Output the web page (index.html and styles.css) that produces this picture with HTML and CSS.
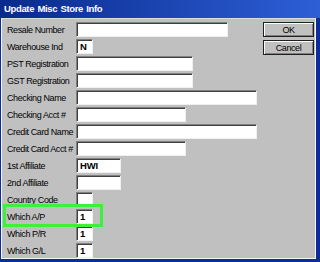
FILE: index.html
```html
<!DOCTYPE html>
<html lang="en">
<head>
  <meta charset="UTF-8">
  <title>Update Misc Store Info</title>
  <link rel="stylesheet" href="styles.css">
</head>
<body>
  <div class="window">
    <div class="titlebar">Update Misc Store Info</div>
    <div class="frame">
      <div class="client">
        <div class="form">
          <div class="label">Resale Number</div><div class="field w-xl"></div>
          <div class="label">Warehouse Ind</div><div class="field w-xs">N</div>
          <div class="label">PST Registration</div><div class="field w-l"></div>
          <div class="label">GST Registration</div><div class="field w-l"></div>
          <div class="label">Checking Name</div><div class="field w-xxl"></div>
          <div class="label">Checking Acct #</div><div class="field w-m"></div>
          <div class="label">Credit Card Name</div><div class="field w-xxl"></div>
          <div class="label">Credit Card Acct #</div><div class="field w-m"></div>
          <div class="label">1st Affiliate</div><div class="field w-s">HWI</div>
          <div class="label">2nd Affiliate</div><div class="field w-s"></div>
          <div class="label">Country Code</div><div class="field w-xs"></div>
          <div class="label">Which A/P</div><div class="field w-xs">1</div>
          <div class="label">Which P/R</div><div class="field w-xs">1</div>
          <div class="label">Which G/L</div><div class="field w-xs">1</div>
        </div>
        <div class="buttons">
          <button class="btn">OK</button>
          <button class="btn">Cancel</button>
        </div>
      </div>
    </div>
    <!-- highlight drawn over the Which A/P row -->
    <div class="highlight"></div>
  </div>
</body>
</html>
```

FILE: styles.css
```css
body {
  margin: 0;
  font-family: "Liberation Sans", Arial, sans-serif;
  font-size: 9px;
  letter-spacing: -0.4px;
  color: #000;
}
.window {
  position: relative;
  width: 320px;
  height: 262px;
  display: flex;
  flex-direction: column;
  background-color: #0c2c9c;
  overflow: hidden;
}
.titlebar {
  height: 18px;
  line-height: 17px;
  padding-left: 4px;
  color: #fff;
  font-weight: bold;
  font-size: 9.5px;
  letter-spacing: -0.35px;
  word-spacing: 1px;
  background: linear-gradient(to right, #0a2a8c, #2d5fd6);
}
.frame {
  flex: 1;
  margin: 0 4px 3px 1px;
  background-color: #c0c0c0;
  border-top: 1px solid #dcdcdc;
  border-left: 1px solid #f4f4f4;
  border-right: 1px solid #f4f4f4;
  border-bottom: 1px solid #f4f4f4;
}
.client {
  display: flex;
  padding: 3px 1px 0 5px;
}
.form {
  display: grid;
  grid-template-columns: 69px auto;
  grid-auto-rows: 15px;
  row-gap: 2px;
  align-items: center;
  justify-items: start;
}
.label {
  white-space: nowrap;
  padding-top: 1px;
}
.field {
  height: 15px;
  box-sizing: border-box;
  background-color: #fff;
  border-top: 1px solid #808080;
  border-left: 1px solid #808080;
  border-right: 1px solid #f0f0f0;
  border-bottom: 1px solid #f0f0f0;
  box-shadow: inset 1px 1px 0 #404040;
  padding: 1px 0 0 3px;
  font-size: 9.5px;
  font-weight: bold;
  letter-spacing: -0.2px;
  line-height: 12px;
}
.w-xs { width: 17px; }
.w-s { width: 45px; }
.w-m { width: 110px; }
.w-l { width: 117px; }
.w-xl { width: 152px; }
.w-xxl { width: 181px; }
.buttons {
  margin-left: auto;
  display: flex;
  flex-direction: column;
  gap: 3px;
}
.btn {
  width: 51px;
  height: 15px;
  padding: 0;
  font-family: "Liberation Sans", Arial, sans-serif;
  font-size: 9px;
  letter-spacing: -0.4px;
  color: #000;
  background-color: #c0c0c0;
  border: 1px solid #202020;
  box-shadow: inset 1px 1px 0 #fff, inset -1px -1px 0 #808080;
}
.highlight {
  position: absolute;
  left: 3px;
  top: 204px;
  width: 94px;
  height: 17px;
  border: 3px solid #3cf03c;
}
```
